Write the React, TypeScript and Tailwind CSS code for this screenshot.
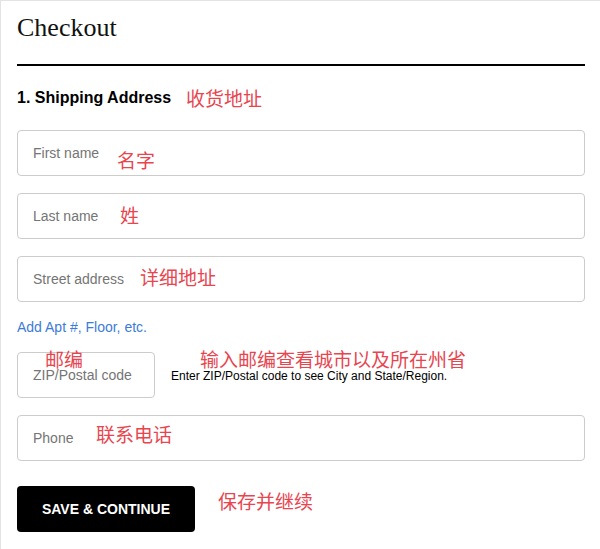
import React from "react";

const cjk = "font-['Noto_Sans_CJK_SC',sans-serif] text-[19px] leading-[19px] text-[#e8454f] whitespace-nowrap";

function Note({ children, className }: { children: React.ReactNode; className: string }) {
  return <span className={`absolute pointer-events-none ${cjk} ${className}`}>{children}</span>;
}

function Field({ placeholder, note, noteClass }: { placeholder: string; note: string; noteClass: string }) {
  return (
    <div className="relative">
      <input
        placeholder={placeholder}
        className="block w-full h-[46px] rounded-[4px] border border-[#cccccc] bg-white px-[15px] text-[14px] font-['Liberation_Sans',Arial,sans-serif] text-black placeholder:text-[#757575] outline-none"
      />
      <Note className={noteClass}>{note}</Note>
    </div>
  );
}

export default function App() {
  return (
    <div className="min-h-[549px] bg-white border-t border-l border-[#e3e3e3] pl-4 pr-[15px] pt-[12px] font-['Liberation_Sans',Arial,sans-serif]">
      <h1 className="font-['Liberation_Serif','Times_New_Roman',serif] text-[26px] leading-[30px] text-[#111] font-normal">
        Checkout
      </h1>
      <div className="mt-[21px] h-[2px] bg-black" />

      <div className="relative mt-[22px]">
        <h2 className="text-[16px] leading-[20px] font-bold text-black">1. Shipping Address</h2>
        <Note className="left-[169px] top-[0px]">收货地址</Note>
      </div>

      <div className="mt-[22px] flex flex-col gap-[17px]">
        <Field placeholder="First name" note="名字" noteClass="left-[100px] top-[20px]" />
        <Field placeholder="Last name" note="姓" noteClass="left-[103px] top-[12px]" />
        <Field placeholder="Street address" note="详细地址" noteClass="left-[123px] top-[11px]" />
      </div>

      <div className="mt-[15px] text-[14px] leading-[20px] text-[#3d7bd9]">Add Apt #, Floor, etc.</div>

      <div className="relative mt-[15px] flex items-center gap-4">
        <input
          placeholder="ZIP/Postal code"
          className="block w-[138px] h-[46px] rounded-[4px] border border-[#cccccc] bg-white px-[15px] text-[14px] text-black placeholder:text-[#757575] outline-none"
        />
        <span className="text-[12px] leading-[14px] text-black pt-[2px]">
          Enter ZIP/Postal code to see City and State/Region.
        </span>
        <Note className="left-[28px] top-[-3px]">邮编</Note>
        <Note className="left-[183px] top-[-3px]">输入邮编查看城市以及所在州省</Note>
      </div>

      <div className="mt-[17px]">
        <Field placeholder="Phone" note="联系电话" noteClass="left-[79px] top-[9px]" />
      </div>

      <div className="relative mt-[25px]">
        <button className="h-[46px] w-[178px] rounded-[4px] bg-black text-white text-[14px] font-bold tracking-normal">
          SAVE &amp; CONTINUE
        </button>
        <Note className="left-[201px] top-[5px]">保存并继续</Note>
      </div>
    </div>
  );
}
